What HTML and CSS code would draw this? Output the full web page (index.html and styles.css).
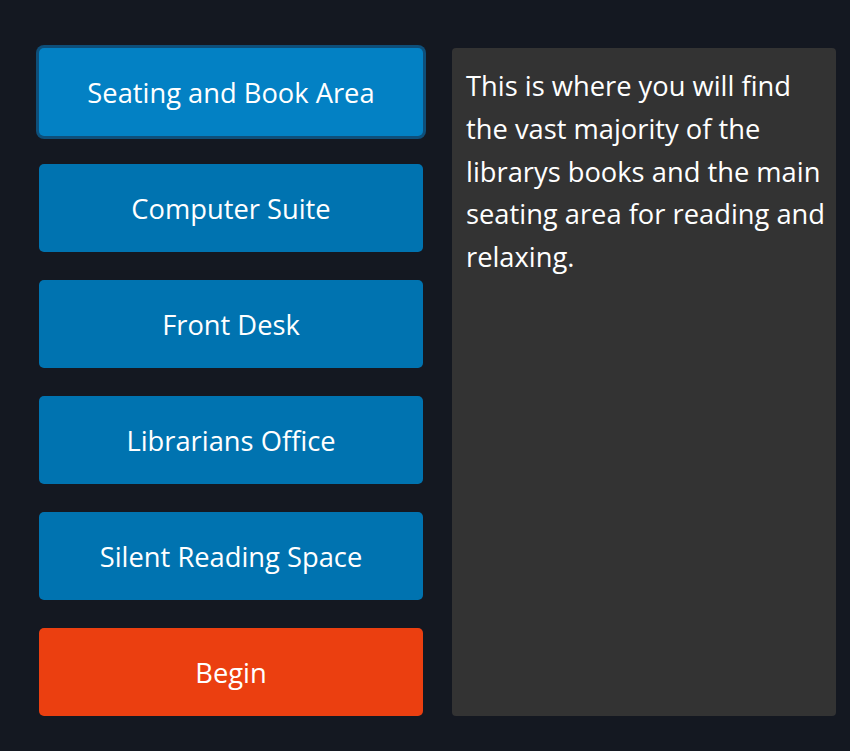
FILE: index.html
```html
<!DOCTYPE html>
<html lang="en">
<head>
<meta charset="utf-8">
<title>Library Map</title>
<link rel="stylesheet" href="styles.css">
</head>
<body>
<main class="layout">
  <nav class="menu">
    <button class="area-btn active">Seating and Book Area</button>
    <button class="area-btn">Computer Suite</button>
    <button class="area-btn">Front Desk</button>
    <button class="area-btn">Librarians Office</button>
    <button class="area-btn">Silent Reading Space</button>
    <button class="area-btn begin">Begin</button>
  </nav>
  <section class="info">
    <p>This is where you will find the vast majority of the librarys books and the main seating area for reading and relaxing.</p>
  </section>
</main>
</body>
</html>
```

FILE: styles.css
```css
html, body {
  margin: 0;
  padding: 0;
  background: #141821;
  height: 100%;
}
body {
  font-family: "Open Sans", "Noto Sans", sans-serif;
  color: #ffffff;
}
.layout {
  display: flex;
  gap: 29px;
  padding: 48px 14px 35px 39px;
  align-items: stretch;
}
.menu {
  display: flex;
  flex-direction: column;
  gap: 28px;
  width: 384px;
}
.area-btn {
  height: 88px;
  border: none;
  border-radius: 5px;
  background: #0073b0;
  color: #ffffff;
  font-family: inherit;
  font-size: 27.3px;
  padding: 0;
}
.area-btn.active {
  background: #0381c4;
  box-shadow: 0 0 0 3px #0e4f7a;
}
.area-btn.begin {
  background: #eb3f10;
}
.info {
  flex: 1;
  background: #333333;
  border-radius: 4px;
  padding: 17px 6px 15px 14px;
}
.info p {
  margin: 0;
  font-size: 27.3px;
  line-height: 42.8px;
}
```
